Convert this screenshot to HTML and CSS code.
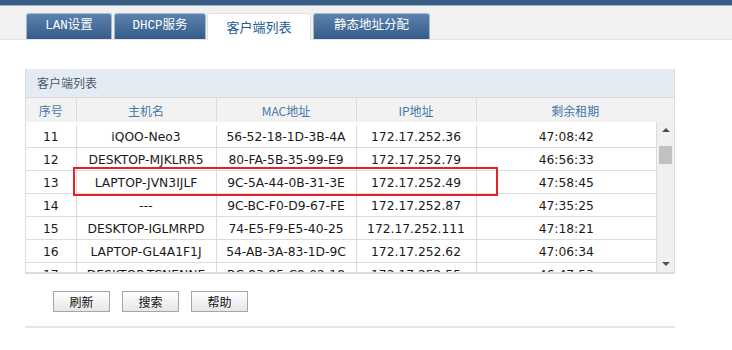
FILE: index.html
```html
<!DOCTYPE html>
<html lang="zh-CN">
  <head>
    <meta charset="UTF-8" />
    <title>客户端列表</title>
    <link rel="stylesheet" href="styles.css">
  </head>
  <body>
    <div class="topbar"></div>
    <div class="tabbar">
      <a class="tab" href="#lan">LAN设置</a>
      <a class="tab tab-dhcp" href="#dhcp">DHCP服务</a>
      <a class="tab active" href="#client">客户端列表</a>
      <a class="tab tab-static" href="#static">静态地址分配</a>
    </div>

    <div class="content">
      <div class="panel">
        <div class="panel-title">客户端列表</div>
        <table class="head-table">
          <colgroup>
            <col class="c-no" /><col class="c-host" /><col class="c-mac" /><col class="c-ip" /><col />
          </colgroup>
          <tr>
            <th>序号</th>
            <th>主机名</th>
            <th>MAC地址</th>
            <th>IP地址</th>
            <th>剩余租期</th>
          </tr>
        </table>
        <div class="body-wrap">
          <div class="body-scroll">
            <table class="body-table">
              <colgroup>
                <col class="c-no" /><col class="c-host" /><col class="c-mac" /><col class="c-ip" /><col />
              </colgroup>
              <tbody id="client-rows"></tbody>
            </table>
            <div class="mark"></div>
          </div>
          <div class="scrollbar">
            <span class="arrow up"></span>
            <span class="thumb"></span>
            <span class="arrow down"></span>
          </div>
        </div>
      </div>

      <div class="buttons">
        <button>刷新</button>
        <button>搜索</button>
        <button>帮助</button>
      </div>
      <div class="bottom-line"></div>
    </div>

    <script>
      var clients = [
        ["11", "iQOO-Neo3", "56-52-18-1D-3B-4A", "172.17.252.36", "47:08:42"],
        ["12", "DESKTOP-MJKLRR5", "80-FA-5B-35-99-E9", "172.17.252.79", "46:56:33"],
        ["13", "LAPTOP-JVN3IJLF", "9C-5A-44-0B-31-3E", "172.17.252.49", "47:58:45"],
        ["14", "---", "9C-BC-F0-D9-67-FE", "172.17.252.87", "47:35:25"],
        ["15", "DESKTOP-IGLMRPD", "74-E5-F9-E5-40-25", "172.17.252.111", "47:18:21"],
        ["16", "LAPTOP-GL4A1F1J", "54-AB-3A-83-1D-9C", "172.17.252.62", "47:06:34"],
        ["17", "DESKTOP-TCNENNE", "BC-83-85-C9-02-18", "172.17.252.55", "46:47:53"]
      ];

      var rows = document.getElementById("client-rows");
      clients.forEach(function (c) {
        var tr = document.createElement("tr");
        tr.innerHTML = c.map(function (v) { return "<td>" + v + "</td>"; }).join("");
        rows.appendChild(tr);
      });
    </script>
  </body>
</html>
```

FILE: styles.css
```css
body {
  margin: 0;
  padding: 0;
  background-color: #fff;
  font-family: "DejaVu Sans", Verdana, sans-serif;
  font-size: 12px;
  color: #1a1a1a;
}

.topbar {
  height: 5px;
  background-color: #3a5d86;
  border-bottom: 1px solid #9fb1c6;
}

.tabbar {
  height: 33px;
  background-color: #f1f1f1;
  border-bottom: 1px solid #e4e4e4;
  display: flex;
  align-items: flex-end;
  padding-left: 26px;
  gap: 2px;
}

.tab {
  box-sizing: border-box;
  width: 86px;
  height: 26px;
  line-height: 25px;
  text-align: center;
  text-decoration: none;
  color: #fff;
  font-family: "Liberation Mono", "Noto Sans CJK SC", monospace;
  font-size: 12.5px;
  background: linear-gradient(#5b82ae, #365b88);
  border: 1px solid #a9b7c8;
  border-bottom: none;
  border-radius: 3px 3px 0 0;
}

.tab-dhcp {
  width: 92px;
}

.tab.active {
  width: 104px;
  margin-left: -1px;
  height: 27px;
  background: #fff;
  color: #1d5a94;
  border-color: #e2e2e2;
  font-family: "Noto Sans CJK SC", sans-serif;
  font-size: 13px;
  line-height: 26px;
  margin-bottom: -1px;
}

.tab-static {
  width: 117px;
  margin-left: 0;
}

.content {
  padding: 29px 57px 0 25px;
}

.panel {
  border: 1px solid #dcdcdc;
  border-top: none;
}

.panel-title {
  height: 28px;
  line-height: 28px;
  padding-left: 11px;
  background-color: #e4ebf2;
  color: #4a5a6a;
  font-family: "Noto Sans CJK SC", sans-serif;
  font-size: 12px;
}

table {
  width: 100%;
  border-collapse: collapse;
  table-layout: fixed;
}

.c-no {
  width: 50px;
}
.c-host {
  width: 140px;
}
.c-mac {
  width: 140px;
}
.c-ip {
  width: 120px;
}

.head-table th {
  height: 24px;
  padding: 0;
  font-weight: normal;
  font-family: "Noto Sans CJK SC", sans-serif;
  font-size: 12px;
  color: #4676aa;
  background-color: #f2f2f2;
  border-top: 1px solid #d9d9d9;
  border-left: 1px solid #dcdcdc;
}

.head-table th:first-child {
  border-left: none;
}

.body-wrap {
  display: flex;
  height: 150px;
  border-bottom: 1px solid #dcdcdc;
  overflow: hidden;
}

.body-scroll {
  position: relative;
  flex: 1;
  padding-top: 3px;
}

.body-table td {
  height: 21px;
  padding: 1px 0 0;
  font-size: 12.3px;
  text-align: center;
  white-space: nowrap;
  overflow: hidden;
  border-bottom: 1px solid #dcdcdc;
  border-left: 1px solid #dcdcdc;
}

.body-table td:first-child {
  border-left: none;
}

.mark {
  position: absolute;
  left: 47px;
  top: 45px;
  width: 421px;
  height: 25px;
  border: 2px solid #e3222c;
}

.scrollbar {
  width: 17px;
  background-color: #f0f0f0;
  border-left: 1px solid #dcdcdc;
  display: flex;
  flex-direction: column;
  align-items: center;
}

.arrow {
  width: 0;
  height: 0;
  border-left: 4px solid transparent;
  border-right: 4px solid transparent;
}

.arrow.up {
  margin-top: 6px;
  border-bottom: 4px solid #505050;
}

.arrow.down {
  margin-top: auto;
  margin-bottom: 6px;
  border-top: 4px solid #505050;
}

.thumb {
  width: 13px;
  height: 18px;
  margin-top: 14px;
  background-color: #c1c1c1;
}

.buttons {
  display: flex;
  gap: 12px;
  padding: 17px 0 0 28px;
}

button {
  width: 57px;
  height: 21px;
  padding: 0;
  font-family: "Noto Sans CJK SC", sans-serif;
  font-size: 12px;
  color: #111;
  background: linear-gradient(#ffffff, #e6e6e6);
  border: 1px solid #a6a6a6;
  border-radius: 0;
  cursor: pointer;
}

.bottom-line {
  margin-top: 14px;
  height: 2px;
  background-color: #e6e6e6;
}
```
